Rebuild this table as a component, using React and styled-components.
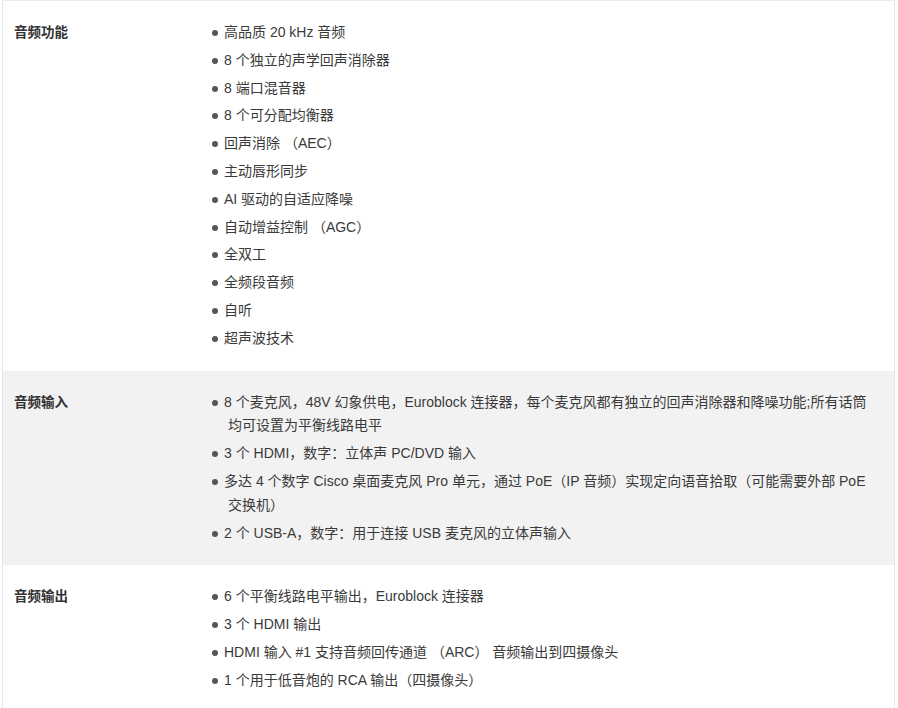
import styled, { createGlobalStyle } from 'styled-components';

const specs = [
  {
    label: '音频功能',
    items: [
      '高品质 20 kHz 音频',
      '8 个独立的声学回声消除器',
      '8 端口混音器',
      '8 个可分配均衡器',
      '回声消除 （AEC）',
      '主动唇形同步',
      'AI 驱动的自适应降噪',
      '自动增益控制 （AGC）',
      '全双工',
      '全频段音频',
      '自听',
      '超声波技术',
    ],
  },
  {
    label: '音频输入',
    shaded: true,
    items: [
      '8 个麦克风，48V 幻象供电，Euroblock 连接器，每个麦克风都有独立的回声消除器和降噪功能;所有话筒均可设置为平衡线路电平',
      '3 个 HDMI，数字：立体声 PC/DVD 输入',
      '多达 4 个数字 Cisco 桌面麦克风 Pro 单元，通过 PoE（IP 音频）实现定向语音拾取（可能需要外部 PoE 交换机）',
      '2 个 USB-A，数字：用于连接 USB 麦克风的立体声输入',
    ],
  },
  {
    label: '音频输出',
    items: [
      '6 个平衡线路电平输出，Euroblock 连接器',
      '3 个 HDMI 输出',
      'HDMI 输入 #1 支持音频回传通道 （ARC） 音频输出到四摄像头',
      '1 个用于低音炮的 RCA 输出（四摄像头）',
    ],
  },
];

function App() {
  return (
    <>
      <GlobalStyle />
      <Table>
        {specs.map((row) => (
          <Row key={row.label} $shaded={row.shaded}>
            <Label>{row.label}</Label>
            <Content>
              <List>
                {row.items.map((item) => (
                  <Item key={item}>{item}</Item>
                ))}
              </List>
            </Content>
          </Row>
        ))}
      </Table>
    </>
  );
}

const GlobalStyle = createGlobalStyle`
  body {
    margin: 0;
    background: #fff;
    font-family: "Liberation Sans", "Noto Sans CJK SC", sans-serif;
  }
`;

const Table = styled.div`
  width: 891px;
  margin-left: 2px;
  border-left: 1px solid #e6e6e6;
  border-right: 1px solid #e6e6e6;
  border-top: 1px solid #ececec;
`;

const Row = styled.div`
  display: grid;
  grid-template-columns: 202px 1fr;
  background-color: ${(p) => (p.$shaded ? '#f2f2f2' : '#fff')};
  padding: 20px 0 16px;
`;

const Label = styled.div`
  padding-left: 11px;
  font-size: 13.5px;
  font-weight: 700;
  line-height: 23.8px;
  color: #333;
`;

const Content = styled.div`
  padding: 0 18px 0 7px;
`;

const List = styled.ul`
  list-style: none;
  margin: 0;
  padding: 0;
`;

const Item = styled.li`
  position: relative;
  padding-left: 16px;
  text-indent: -4px;
  margin-bottom: 4px;
  font-size: 14px;
  line-height: 23.8px;
  color: #3a3a3a;

  &::before {
    content: '';
    position: absolute;
    left: 0;
    top: 9px;
    width: 6px;
    height: 6px;
    border-radius: 50%;
    background: #555;
  }
`;

export default App;
